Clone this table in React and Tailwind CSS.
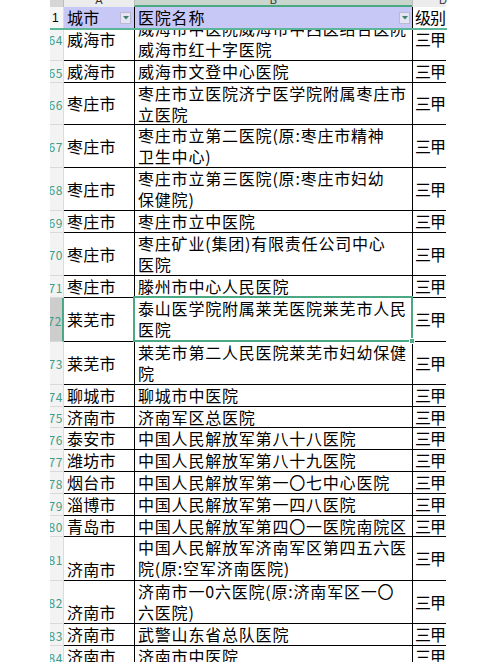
import React from "react";

const GREEN = "border-[#4aa982]";

const rows = [
  { n: 64, h: 43, city: "威海市", name: ["威海市中医院威海市中西医结合医院", "威海市红十字医院"] },
  { n: 65, h: 22, city: "威海市", name: ["威海市文登中心医院"] },
  { n: 66, h: 42, city: "枣庄市", name: ["枣庄市立医院济宁医学院附属枣庄市", "立医院"] },
  { n: 67, h: 43, city: "枣庄市", name: ["枣庄市立第二医院(原:枣庄市精神", "卫生中心)"] },
  { n: 68, h: 43, city: "枣庄市", name: ["枣庄市立第三医院(原:枣庄市妇幼", "保健院)"] },
  { n: 69, h: 22, city: "枣庄市", name: ["枣庄市立中医院"] },
  { n: 70, h: 43, city: "枣庄市", name: ["枣庄矿业(集团)有限责任公司中心", "医院"] },
  { n: 71, h: 22, city: "枣庄市", name: ["滕州市中心人民医院"] },
  { n: 72, h: 44, city: "莱芜市", name: ["泰山医学院附属莱芜医院莱芜市人民", "医院"], active: true },
  { n: 73, h: 43, city: "莱芜市", name: ["莱芜市第二人民医院莱芜市妇幼保健", "院"] },
  { n: 74, h: 22, city: "聊城市", name: ["聊城市中医院"] },
  { n: 75, h: 21, city: "济南市", name: ["济南军区总医院"] },
  { n: 76, h: 22, city: "泰安市", name: ["中国人民解放军第八十八医院"] },
  { n: 77, h: 22, city: "潍坊市", name: ["中国人民解放军第八十九医院"] },
  { n: 78, h: 22, city: "烟台市", name: ["中国人民解放军第一〇七中心医院"] },
  { n: 79, h: 22, city: "淄博市", name: ["中国人民解放军第一四八医院"] },
  { n: 80, h: 21, city: "青岛市", name: ["中国人民解放军第四〇一医院南院区"] },
  { n: 81, h: 44, city: "济南市", name: ["中国人民解放军济南军区第四五六医", "院(原:空军济南医院)"], bottom: true },
  { n: 82, h: 43, city: "济南市", name: ["济南市一0六医院(原:济南军区一〇", "六医院)"], bottom: true },
  { n: 83, h: 22, city: "济南市", name: ["武警山东省总队医院"] },
  { n: 84, h: 22, city: "济南市", name: ["济南市中医院"] },
];

const FilterButton = () => (
  <div className="w-[11px] h-[12px] bg-[#e4e4f2] border border-[#b9b9d6] flex items-center justify-center shrink-0">
    <svg width="6" height="4" viewBox="0 0 6 4">
      <path d="M0 0 L6 0 L3 3.5 Z" fill="#3f7f6c" />
    </svg>
  </div>
);

const Row = ({ row, first }) => {
  const lines = row.name;
  return (
    <div
      className={`flex shrink-0 ${first ? "-mt-[12px]" : ""}`}
      style={{ height: row.h }}
    >
      <div
        className={`w-[14px] shrink-0 flex items-center justify-end overflow-hidden border-b border-[#d9d9d9] ${
          row.active ? "bg-[#cdcdcd] border-r-2 border-r-[#4aa982]" : "bg-[#f3f3f3] border-r border-r-[#dcdcdc]"
        }`}
      >
        <span className="text-[12px] leading-none text-[#3f9c85] tracking-[0.6px] whitespace-nowrap pt-[2px]">
          {row.n}
        </span>
      </div>
      <div
        className={`w-[70px] shrink-0 border-b border-black flex pl-[3px] ${
          row.bottom ? "items-end" : "items-center"
        }`}
      >
        <span className="leading-[21px] tracking-[0.2px] whitespace-nowrap">{row.city}</span>
      </div>
      <div className="w-[278px] shrink-0 border-l border-b border-black relative">
        <div className="pl-[3px] overflow-hidden">
          {lines.map((l, i) => (
            <div key={i} className="leading-[21px] tracking-[0.8px] whitespace-nowrap">
              {l}
            </div>
          ))}
        </div>
        {row.active && (
          <div className={`absolute -top-[2px] -left-[2px] -right-[1px] -bottom-[1px] border-2 ${GREEN}`}>
            <div className="absolute -right-[4px] -bottom-[4px] w-[6px] h-[6px] bg-[#4aa982] border border-white" />
          </div>
        )}
      </div>
      <div className="w-[34px] shrink-0 border-l border-b border-black flex items-center pl-[2px] overflow-hidden">
        <span className="leading-[21px] whitespace-nowrap tracking-[-1px]">三甲</span>
      </div>
    </div>
  );
};

export default function App() {
  return (
    <div
      className="w-[497px] h-[662px] bg-white overflow-hidden flex text-[16px] text-black"
      style={{ fontFamily: '"Noto Sans CJK SC", "Noto Sans", sans-serif' }}
    >
      <div className="w-[50px] shrink-0" />
      <div className="w-[397px] shrink-0 flex flex-col overflow-hidden">
        {/* column letters, only the bottom shows */}
        <div className="flex h-[7px] shrink-0 overflow-hidden text-[11px] text-[#333]" style={{ fontFamily: '"Liberation Sans", sans-serif' }}>
          <div className="w-[14px] shrink-0 bg-[#d6d6d6] border-r border-[#bdbdbd]" />
          <div className="w-[70px] shrink-0 bg-[#ececec] flex justify-center">
            <span className="-mt-[6px] leading-[13px]">A</span>
          </div>
          <div className="w-[278px] shrink-0 bg-[#c9d6ce] border-l border-[#b4c2b9] border-b-2 border-b-[#4aa982] flex justify-center">
            <span className="-mt-[6px] leading-[13px]">B</span>
          </div>
          <div className="w-[34px] shrink-0 bg-[#ececec] border-l border-[#bdbdbd] pl-[26px]">
            <span className="-mt-[6px] leading-[13px] block">D</span>
          </div>
        </div>

        {/* header row 1 */}
        <div className="flex h-[23px] shrink-0 border-b-2 border-[#5bb598]">
          <div className="w-[14px] shrink-0 bg-[#f6f6f6] flex items-center pl-[2px] border-r border-[#dcdcdc]">
            <span className="text-[12px] leading-none" style={{ fontFamily: '"Liberation Sans", sans-serif' }}>1</span>
          </div>
          <div className="w-[70px] shrink-0 bg-[#c8c8f6] flex items-center justify-between pl-[3px] pr-[3px]">
            <span className="leading-[21px] tracking-[0.2px]">城市</span>
            <FilterButton />
          </div>
          <div className="w-[278px] shrink-0 bg-[#c8c8f6] border-l border-black flex items-center justify-between pl-[3px] pr-[2px]">
            <span className="leading-[21px] tracking-[0.8px]">医院名称</span>
            <FilterButton />
          </div>
          <div className="w-[34px] shrink-0 bg-white border-l border-black flex items-center pl-[2px] overflow-hidden">
            <span className="leading-[21px] whitespace-nowrap tracking-[-1px]">级别</span>
          </div>
        </div>

        {/* data rows */}
        <div className="flex flex-col overflow-hidden flex-1">
          {rows.map((r, i) => (
            <Row key={r.n} row={r} first={i === 0} />
          ))}
        </div>
      </div>
      <div className="flex-1" />
    </div>
  );
}
